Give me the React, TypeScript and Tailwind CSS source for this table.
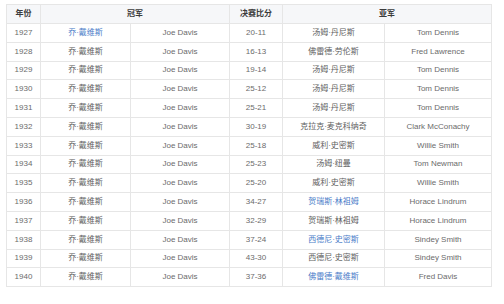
const rows: [string, string, boolean, string, string, string, boolean][] = [
  ["1927", "乔·戴维斯", true, "20-11", "汤姆·丹尼斯", "Tom Dennis", false],
  ["1928", "乔·戴维斯", false, "16-13", "佛雷德·劳伦斯", "Fred Lawrence", false],
  ["1929", "乔·戴维斯", false, "19-14", "汤姆·丹尼斯", "Tom Dennis", false],
  ["1930", "乔·戴维斯", false, "25-12", "汤姆·丹尼斯", "Tom Dennis", false],
  ["1931", "乔·戴维斯", false, "25-21", "汤姆·丹尼斯", "Tom Dennis", false],
  ["1932", "乔·戴维斯", false, "30-19", "克拉克·麦克科纳奇", "Clark McConachy", false],
  ["1933", "乔·戴维斯", false, "25-18", "威利·史密斯", "Willie Smith", false],
  ["1934", "乔·戴维斯", false, "25-23", "汤姆·纽曼", "Tom Newman", false],
  ["1935", "乔·戴维斯", false, "25-20", "威利·史密斯", "Willie Smith", false],
  ["1936", "乔·戴维斯", false, "34-27", "贺瑞斯·林祖姆", "Horace Lindrum", true],
  ["1937", "乔·戴维斯", false, "32-29", "贺瑞斯·林祖姆", "Horace Lindrum", false],
  ["1938", "乔·戴维斯", false, "37-24", "西德尼·史密斯", "Sindey Smith", true],
  ["1939", "乔·戴维斯", false, "43-30", "西德尼·史密斯", "Sindey Smith", false],
  ["1940", "乔·戴维斯", false, "37-36", "佛雷德·戴维斯", "Fred Davis", true],
];

function App() {
  return (
    <div className="w-[504px] h-[304px] bg-white pt-[4px] pl-[6px] font-['Liberation_Sans','Noto_Sans_CJK_SC',sans-serif] text-[8px] text-[#6b6b6b]">
      <table className="table-fixed border-collapse w-[485px]">
        <colgroup>
          <col className="w-[34px]" />
          <col className="w-[90px]" />
          <col className="w-[99px]" />
          <col className="w-[53px]" />
          <col className="w-[102px]" />
          <col className="w-[107px]" />
        </colgroup>
        <thead>
          <tr className="h-[19px] bg-[#f6f7f9] text-[#3c3c3c] font-bold">
            <th className="border border-[#e6e6e6] text-center">年份</th>
            <th colSpan={2} className="border border-[#e6e6e6] text-center">冠军</th>
            <th className="border border-[#e6e6e6] text-center">决赛比分</th>
            <th colSpan={2} className="border border-[#e6e6e6] text-center">亚军</th>
          </tr>
        </thead>
        <tbody>
          {rows.map(([year, champ, champLink, score, runner, runnerEn, runnerLink]) => (
            <tr key={year} className="h-[18.8px]">
              <td className="border border-[#e6e6e6] text-center">{year}</td>
              <td className={`border border-[#e6e6e6] text-center ${champLink ? "text-[#4a7cc8]" : "text-[#5e5e5e]"}`}>{champ}</td>
              <td className="border border-[#e6e6e6] text-center">Joe Davis</td>
              <td className="border border-[#e6e6e6] text-center">{score}</td>
              <td className={`border border-[#e6e6e6] text-center ${runnerLink ? "text-[#4a7cc8]" : "text-[#5e5e5e]"}`}>{runner}</td>
              <td className="border border-[#e6e6e6] text-center">{runnerEn}</td>
            </tr>
          ))}
        </tbody>
      </table>
    </div>
  );
}

export default App;
